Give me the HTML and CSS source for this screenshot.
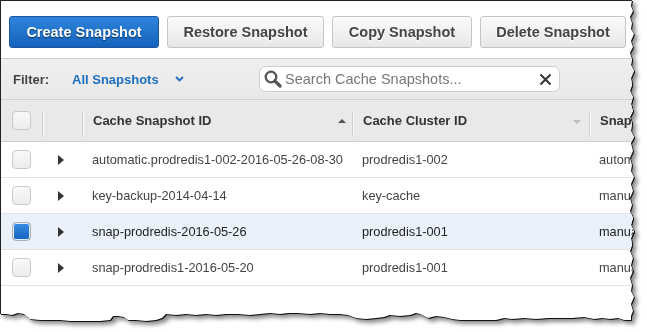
FILE: index.html
```html
<!DOCTYPE html>
<html lang="en">
<head>
  <meta charset="UTF-8" />
  <title>Cache Snapshots</title>
  <link rel="stylesheet" href="styles.css">
</head>
<body>
  <div class="paper">
    <div class="sheet">
      <div class="actions">
        <button class="btn btn-primary w-create">Create Snapshot</button>
        <button class="btn w-restore">Restore Snapshot</button>
        <button class="btn w-copy">Copy Snapshot</button>
        <button class="btn w-delete">Delete Snapshot</button>
      </div>

      <div class="filterbar">
        <span class="filter-label">Filter:</span>
        <span class="filter-value">All Snapshots
          <svg class="chevron" width="9" height="6" viewBox="0 0 9 6"><path d="M1 1 L4.5 4.5 L8 1" fill="none" stroke="#1e6fc1" stroke-width="1.8"/></svg>
        </span>
        <div class="search">
          <svg class="search-icon" width="18" height="18" viewBox="0 0 18 18"><circle cx="7" cy="7" r="5.3" fill="none" stroke="#555" stroke-width="2.3"/><path d="M10.8 10.8 L16 16" stroke="#555" stroke-width="3.2" stroke-linecap="round"/></svg>
          <span class="search-text">Search Cache Snapshots...</span>
          <svg class="search-clear" width="13" height="13" viewBox="0 0 13 13"><path d="M1.5 1.5 L11.5 11.5 M11.5 1.5 L1.5 11.5" stroke="#333" stroke-width="2"/></svg>
        </div>
      </div>

      <div class="grid head">
        <div class="cell"><span class="check"></span></div>
        <div class="cell sep"></div>
        <div class="cell sep title">Cache Snapshot ID <span class="sort-up"></span></div>
        <div class="cell sep title">Cache Cluster ID <span class="sort-down"></span></div>
        <div class="cell sep title">Snapshot Type</div>
      </div>

      <div class="grid row">
        <div class="cell"><span class="check"></span></div>
        <div class="cell"><span class="expand"></span></div>
        <div class="cell">automatic.prodredis1-002-2016-05-26-08-30</div>
        <div class="cell">prodredis1-002</div>
        <div class="cell">automatic</div>
      </div>
      <div class="grid row">
        <div class="cell"><span class="check"></span></div>
        <div class="cell"><span class="expand"></span></div>
        <div class="cell">key-backup-2014-04-14</div>
        <div class="cell">key-cache</div>
        <div class="cell">manual</div>
      </div>
      <div class="grid row selected">
        <div class="cell"><span class="check checked"></span></div>
        <div class="cell"><span class="expand"></span></div>
        <div class="cell">snap-prodredis-2016-05-26</div>
        <div class="cell">prodredis1-001</div>
        <div class="cell">manual</div>
      </div>
      <div class="grid row">
        <div class="cell"><span class="check"></span></div>
        <div class="cell"><span class="expand"></span></div>
        <div class="cell">snap-prodredis1-2016-05-20</div>
        <div class="cell">prodredis1-001</div>
        <div class="cell">manual</div>
      </div>
    </div>
  </div>
</body>
</html>
```

FILE: styles.css
```css
body {
  margin: 0;
  background: #ffffff;
  font-family: 'Liberation Sans', Arial, sans-serif;
}
.paper {
  width: 647px;
  height: 332px;
  filter: drop-shadow(1px 1px 0 #111) drop-shadow(3px 3px 2px rgba(0, 0, 0, 0.45));
}
.sheet {
  width: 646px;
  height: 331px;
  background: #fff;
  border-top: 1px solid #222;
  border-left: 1px solid #222;
  overflow: hidden;
  clip-path: polygon(0 0, 632px 0, 631px 6px, 633px 11px, 630px 17px, 632px 23px, 631px 29px, 634px 34px, 631px 41px, 633px 47px, 630px 53px, 632px 59px, 631px 65px, 634px 71px, 631px 78px, 632px 85px, 630px 91px, 633px 97px, 631px 104px, 633px 111px, 630px 117px, 632px 123px, 631px 131px, 634px 137px, 631px 143px, 633px 151px, 630px 158px, 632px 165px, 631px 171px, 634px 177px, 631px 184px, 633px 191px, 630px 198px, 632px 205px, 630px 211px, 633px 218px, 631px 225px, 634px 231px, 631px 238px, 632px 245px, 630px 251px, 633px 258px, 631px 265px, 633px 271px, 630px 278px, 632px 285px, 631px 291px, 634px 297px, 631px 304px, 633px 311px, 631px 316px, 631px 320px, 624px 320px, 618px 318px, 610px 319px, 602px 318px, 594px 319px, 584px 317px, 572px 318px, 560px 318px, 548px 318px, 536px 319px, 524px 318px, 512px 319px, 504px 318px, 496px 320px, 484px 320px, 472px 320px, 460px 320px, 452px 319px, 444px 317px, 436px 316px, 428px 318px, 420px 314px, 416px 313px, 410px 315px, 400px 316px, 390px 315px, 384px 317px, 376px 318px, 366px 319px, 356px 318px, 348px 315px, 340px 314px, 330px 314px, 320px 313px, 310px 314px, 298px 313px, 288px 313px, 280px 314px, 270px 313px, 260px 314px, 250px 315px, 238px 314px, 226px 314px, 216px 315px, 206px 314px, 196px 315px, 186px 314px, 176px 315px, 166px 314px, 162px 318px, 156px 320px, 146px 321px, 136px 320px, 128px 320px, 124px 317px, 118px 316px, 113px 316px, 110px 320px, 100px 321px, 90px 321px, 80px 321px, 70px 321px, 60px 320px, 50px 320px, 40px 320px, 30px 319px, 24px 314px, 18px 313px, 12px 315px, 6px 314px, 0 314px);
}
.actions {
  display: flex;
  gap: 8px;
  height: 57px;
  padding-left: 8px;
  padding-top: 15px;
  box-sizing: border-box;
}
.btn {
  height: 32px;
  border: 1px solid #c4c4c4;
  border-radius: 3px;
  background: linear-gradient(#fbfbfb, #e7e7e7);
  color: #444;
  font-family: 'Liberation Sans', Arial, sans-serif;
  font-weight: bold;
  font-size: 14.5px;
  text-shadow: 0 1px 0 #fff;
  padding: 0;
}
.btn-primary {
  background: linear-gradient(#2f84dc, #1462bb);
  border-color: #1a57a0;
  color: #fff;
  text-shadow: 0 1px 1px rgba(0, 0, 0, 0.55);
}
.w-create { width: 150px; }
.w-restore { width: 157px; }
.w-copy { width: 140px; }
.w-delete { width: 146px; }

.filterbar {
  display: flex;
  align-items: center;
  height: 40px;
  border-top: 1px solid #cfcfcf;
  border-bottom: 1px solid #cfcfcf;
  background: linear-gradient(#efefef, #e9e9e9);
  padding-left: 12px;
  font-size: 13px;
  font-weight: bold;
}
.filter-label {
  color: #444;
  width: 59px;
}
.filter-value {
  color: #1e6fc1;
  width: 187px;
  display: flex;
  align-items: center;
}
.chevron {
  margin-left: 16px;
}
.search {
  display: flex;
  align-items: center;
  width: 299px;
  height: 24px;
  background: #fff;
  border: 1px solid #cfcfcf;
  border-radius: 7px;
  font-weight: normal;
}
.search-icon {
  margin-left: 4px;
}
.search-text {
  margin-left: 3px;
  color: #777;
  font-size: 14.5px;
  flex: 1;
}
.search-clear {
  margin-right: 7px;
}

.grid {
  display: grid;
  grid-template-columns: 41px 40px 270px 237px 80px;
  font-size: 13px;
}
.head {
  height: 41px;
  background: #e9e9e9;
  border-bottom: 1px solid #cdcdcd;
  color: #333;
  font-weight: bold;
}
.cell {
  display: flex;
  align-items: center;
  position: relative;
  white-space: nowrap;
}
.head .sep::before {
  content: "";
  position: absolute;
  left: 0;
  top: 12px;
  height: 25px;
  border-left: 1px solid #cfcfcf;
  box-shadow: 1px 0 0 #f8f8f8;
}
.title {
  padding-left: 11px;
}
.sort-up {
  position: absolute;
  right: 6px;
  top: 19px;
  border-left: 4px solid transparent;
  border-right: 4px solid transparent;
  border-bottom: 4px solid #555;
}
.sort-down {
  position: absolute;
  right: 8px;
  top: 20px;
  border-left: 4px solid transparent;
  border-right: 4px solid transparent;
  border-top: 4px solid #bdbdbd;
}
.row {
  height: 35px;
  border-bottom: 1px solid #e2e2e2;
  color: #444;
  font-size: 12.75px;
}
.row .cell:nth-child(n+3) {
  padding-left: 10px;
}
.selected {
  background: #eaf1fb;
  color: #222;
}
.check {
  width: 17px;
  height: 17px;
  margin-left: 11px;
  border: 1px solid #c9c9c9;
  border-radius: 4px;
  background: linear-gradient(#f9f9f9, #ececec);
}
.check.checked {
  border-color: #a8b0ba;
  background: linear-gradient(#3a8ee4, #1462c0);
  box-shadow: inset 0 0 0 1px #e6edf5;
}
.expand {
  margin-left: 16px;
  border-top: 5px solid transparent;
  border-bottom: 5px solid transparent;
  border-left: 6px solid #333;
}
```
